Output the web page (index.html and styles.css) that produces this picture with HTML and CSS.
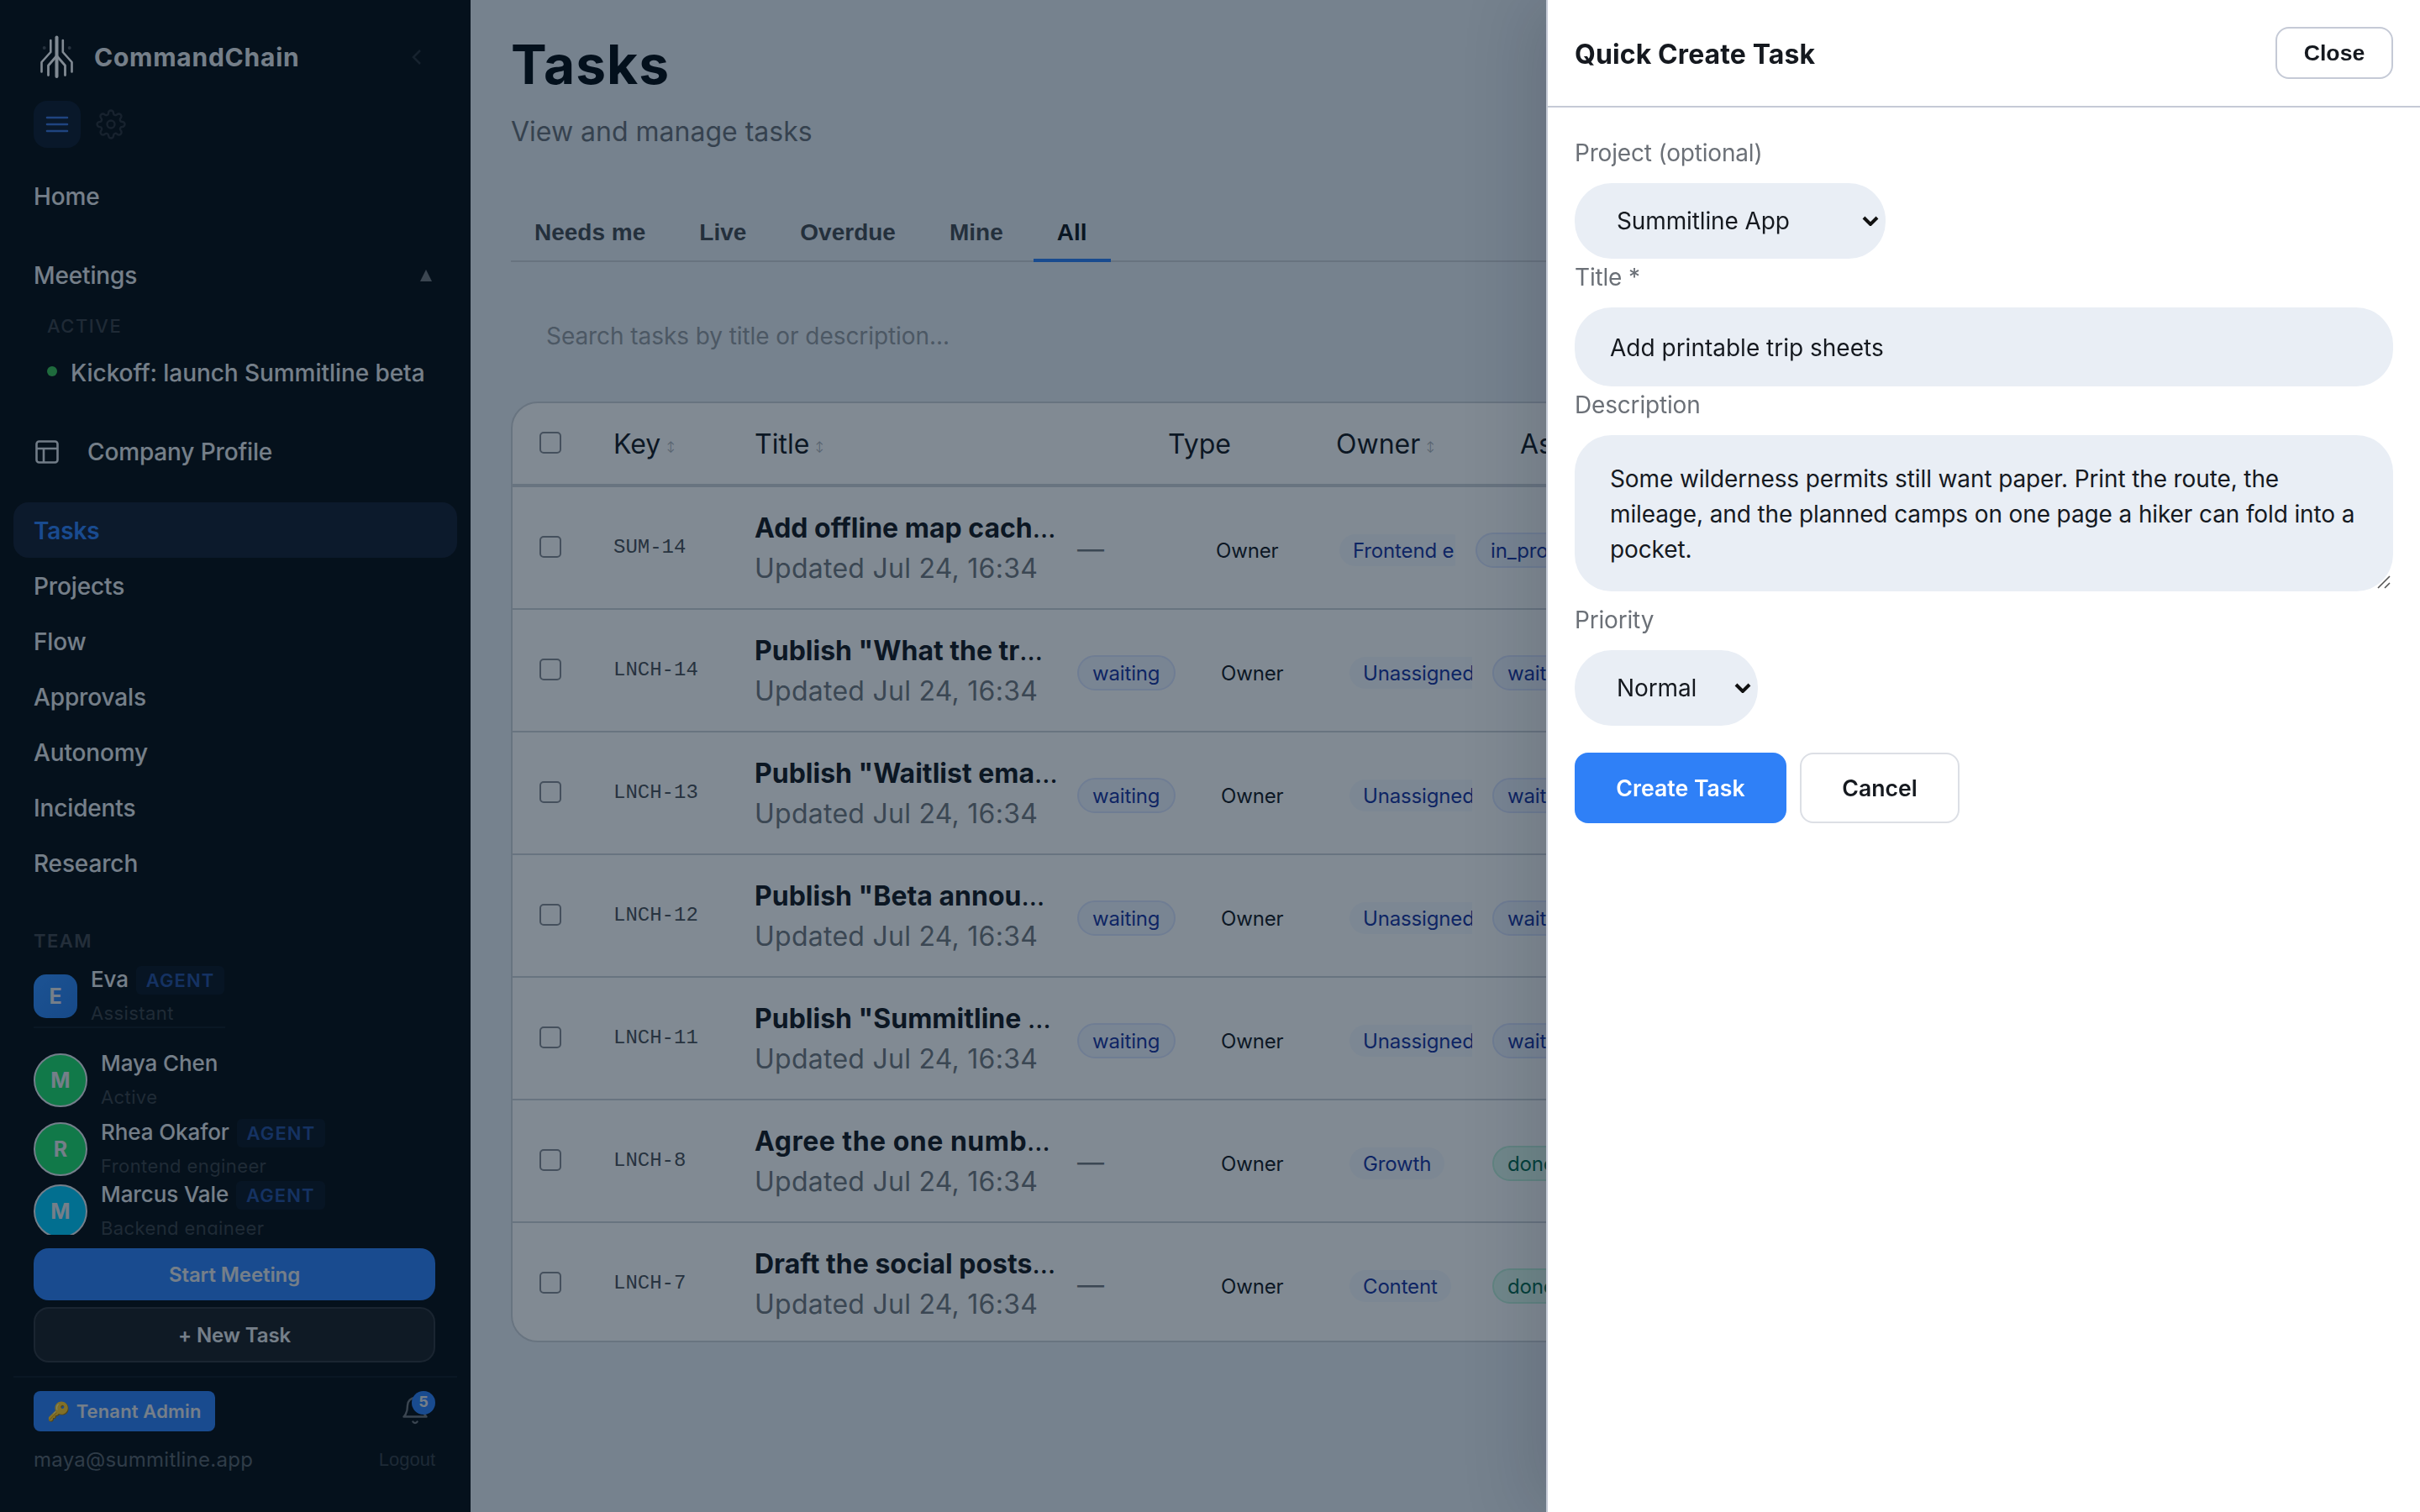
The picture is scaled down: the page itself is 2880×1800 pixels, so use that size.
FILE: index.html
```html
<!DOCTYPE html>
<html>
<head lang="en">
<meta charset="UTF-8">
<title>Tasks - CommandChain</title>
<link rel="stylesheet" href="styles.css">
</head>
<body>
<div class="app">
    <aside class="sidebar">
        <div class="side-top">
            <div class="brand">
                <svg class="logo" viewBox="0 0 56 56" fill="none" stroke="#fff" stroke-linecap="round" stroke-linejoin="round">
                    <path stroke-width="4" d="M27.500 4.500v46.500"/>
                    <path stroke-width="2.600" d="M20.300 8v14L9.500 34v11.500M34.800 8v14l10.700 12v11.500"/>
                    <path stroke-width="2.800" d="M27.500 26.500L17.500 38v11.500M27.500 26.500l10 11.500v11.500"/>
                    <g fill="#4a4f55" stroke="none"><circle cx="12.700" cy="17" r="2"/><circle cx="42.700" cy="17" r="2"/></g>
                </svg>
                <span class="brand-name">CommandChain</span>
                <svg class="chev" viewBox="0 0 12 20"><path d="M10 2L2 10l8 8" fill="none" stroke="#2a3036" stroke-width="2.500"/></svg>
            </div>
            <div class="tools">
                <span class="tool on">
                    <svg width="32" height="32" viewBox="0 0 32 32"><path d="M4 8h24M4 16h24M4 24h24" stroke="#3a72d8" stroke-width="2.600" stroke-linecap="round"/></svg>
                </span>
                <svg class="gear" viewBox="0 0 24 24" fill="none" stroke="#2a2e34" stroke-width="1.600" stroke-linecap="round" stroke-linejoin="round">
                    <circle cx="12" cy="12" r="3"/>
                    <path d="M19.400 15a1.650 1.650 0 0 0 .33 1.820l.06.06a2 2 0 0 1 0 2.830 2 2 0 0 1-2.830 0l-.06-.06a1.650 1.650 0 0 0-1.820-.33 1.650 1.650 0 0 0-1 1.510V21a2 2 0 0 1-2 2 2 2 0 0 1-2-2v-.09A1.650 1.650 0 0 0 9 19.400a1.650 1.650 0 0 0-1.820.33l-.06.06a2 2 0 0 1-2.830 0 2 2 0 0 1 0-2.830l.06-.06a1.650 1.650 0 0 0 .33-1.820 1.650 1.650 0 0 0-1.510-1H3a2 2 0 0 1-2-2 2 2 0 0 1 2-2h.09A1.650 1.650 0 0 0 4.600 9a1.650 1.650 0 0 0-.33-1.820l-.06-.06a2 2 0 0 1 0-2.830 2 2 0 0 1 2.830 0l.06.06a1.650 1.650 0 0 0 1.820.33H9a1.650 1.650 0 0 0 1-1.510V3a2 2 0 0 1 2-2 2 2 0 0 1 2 2v.09a1.650 1.650 0 0 0 1 1.510 1.650 1.650 0 0 0 1.820-.33l.06-.06a2 2 0 0 1 2.830 0 2 2 0 0 1 0 2.830l-.06.06a1.650 1.650 0 0 0-.33 1.820V9a1.650 1.650 0 0 0 1.510 1H21a2 2 0 0 1 2 2 2 2 0 0 1-2 2h-.09a1.650 1.650 0 0 0-1.510 1z"/>
                </svg>
            </div>
            <a class="nav home">Home</a>
            <a class="nav meetings">Meetings <svg width="14" height="14" viewBox="0 0 14 14"><path d="M7 0l7 14H0z" fill="#73767b"/></svg></a>
            <div class="sub-label">ACTIVE</div>
            <a class="meeting"><i class="dot"></i>Kickoff: launch Summitline beta</a>
            <a class="nav company">
                <svg width="32" height="32" viewBox="0 0 32 32" fill="none" stroke="#dfe2e6" stroke-width="2.600"><rect x="3.500" y="3.500" width="25" height="25" rx="3"/><path d="M3.500 12h25M12 12v16.500"/></svg>
                Company Profile
            </a>
            <a class="nav tasks active">Tasks</a>
            <a class="nav">Projects</a>
            <a class="nav">Flow</a>
            <a class="nav">Approvals</a>
            <a class="nav">Autonomy</a>
            <a class="nav">Incidents</a>
            <a class="nav">Research</a>
            <div class="team-label">TEAM</div>
            <div class="person eva">
                <span class="avatar square">E</span>
                <div class="who"><div class="name">Eva <b class="agent">AGENT</b></div><div class="role">Assistant</div></div>
            </div>
            <div class="person maya">
                <span class="avatar green">M</span>
                <div class="who"><div class="name">Maya Chen</div><div class="role">Active</div></div>
            </div>
            <div class="person">
                <span class="avatar green">R</span>
                <div class="who"><div class="name">Rhea Okafor <b class="agent">AGENT</b></div><div class="role">Frontend engineer</div></div>
            </div>
            <div class="person">
                <span class="avatar cyan">M</span>
                <div class="who"><div class="name">Marcus Vale <b class="agent">AGENT</b></div><div class="role">Backend engineer</div></div>
            </div>
        </div>
        <div class="side-actions">
            <button class="start">Start Meeting</button>
            <button class="new">+ New Task</button>
        </div>
        <div class="side-foot">
            <div class="foot-row">
                <span class="tenant"><span class="key">🔑</span>Tenant Admin</span>
                <span class="bell">
                    <svg width="36" height="36" viewBox="0 0 24 24" fill="none" stroke="#73767b" stroke-width="1.600" stroke-linecap="round" stroke-linejoin="round"><path d="M18 8A6 6 0 0 0 6 8c0 7-3 9-3 9h18s-3-2-3-9"/><path d="M13.730 21a2 2 0 0 1-3.460 0"/></svg>
                    <b class="count">5</b>
                </span>
            </div>
            <div class="foot-row user"><span class="mail">maya@summitline.app</span><span class="logout">Logout</span></div>
        </div>
    </aside>

    <main class="main">
        <h1>Tasks</h1>
        <p class="lead">View and manage tasks</p>
        <div class="tabs">
            <span class="tab">Needs me</span>
            <span class="tab">Live</span>
            <span class="tab">Overdue</span>
            <span class="tab">Mine</span>
            <span class="tab cur">All</span>
        </div>
        <div class="search">Search tasks by title or description...</div>
        <div class="table">
            <div class="row head">
                <span class="check"></span>
                <span>Key <i class="sort">↕</i></span>
                <span>Title <i class="sort">↕</i></span>
                <span>Type</span>
                <span>Owner <i class="sort">↕</i></span>
                <span>Assignee</span>
            </div>
            <div class="row first">
                <span class="check"></span>
                <span class="id">SUM-14</span>
                <div class="title"><b>Add offline map cach</b>…<p>Updated Jul 24, 16:34</p></div>
                <span class="cell dash">—</span>
                <span class="cell">Owner</span>
                <span class="cell clip"><i class="pill soft">Frontend e</i></span>
                <span class="cell"><i class="pill">in_progress</i></span>
            </div>
            <div class="row">
                <span class="check"></span>
                <span class="id">LNCH-14</span>
                <div class="title"><b>Publish "What the tr</b>…<p>Updated Jul 24, 16:34</p></div>
                <span class="cell"><i class="pill">waiting</i></span>
                <span class="cell">Owner</span>
                <span class="cell clip"><i class="pill soft">Unassigned</i></span>
                <span class="cell"><i class="pill">waiting</i></span>
            </div>
            <div class="row">
                <span class="check"></span>
                <span class="id">LNCH-13</span>
                <div class="title"><b>Publish "Waitlist ema</b>…<p>Updated Jul 24, 16:34</p></div>
                <span class="cell"><i class="pill">waiting</i></span>
                <span class="cell">Owner</span>
                <span class="cell clip"><i class="pill soft">Unassigned</i></span>
                <span class="cell"><i class="pill">waiting</i></span>
            </div>
            <div class="row">
                <span class="check"></span>
                <span class="id">LNCH-12</span>
                <div class="title"><b>Publish "Beta annou</b>…<p>Updated Jul 24, 16:34</p></div>
                <span class="cell"><i class="pill">waiting</i></span>
                <span class="cell">Owner</span>
                <span class="cell clip"><i class="pill soft">Unassigned</i></span>
                <span class="cell"><i class="pill">waiting</i></span>
            </div>
            <div class="row">
                <span class="check"></span>
                <span class="id">LNCH-11</span>
                <div class="title"><b>Publish "Summitline </b>…<p>Updated Jul 24, 16:34</p></div>
                <span class="cell"><i class="pill">waiting</i></span>
                <span class="cell">Owner</span>
                <span class="cell clip"><i class="pill soft">Unassigned</i></span>
                <span class="cell"><i class="pill">waiting</i></span>
            </div>
            <div class="row">
                <span class="check"></span>
                <span class="id">LNCH-8</span>
                <div class="title"><b class="wide">Agree the one numb</b>…<p>Updated Jul 24, 16:34</p></div>
                <span class="cell dash">—</span>
                <span class="cell">Owner</span>
                <span class="cell clip"><i class="pill soft">Growth</i></span>
                <span class="cell"><i class="pill done">done</i></span>
            </div>
            <div class="row last">
                <span class="check"></span>
                <span class="id">LNCH-7</span>
                <div class="title"><b>Draft the social posts</b>…<p>Updated Jul 24, 16:34</p></div>
                <span class="cell dash">—</span>
                <span class="cell">Owner</span>
                <span class="cell clip"><i class="pill soft">Content</i></span>
                <span class="cell"><i class="pill done">done</i></span>
            </div>
        </div>
    </main>
</div>

<div class="overlay"></div>
<section class="drawer">
    <header class="drawer-head">
        <h2>Quick Create Task</h2>
        <button class="close">Close</button>
    </header>
    <div class="form">
        <label>Project (optional)</label>
        <div class="select project">Summitline App <svg width="20" height="12" viewBox="0 0 20 12"><path d="M2 2l8 8 8-8" fill="none" stroke="#111" stroke-width="4"/></svg></div>
        <label class="l-title">Title *</label>
        <div class="input">Add printable trip sheets</div>
        <label class="l-desc">Description</label>
        <div class="area">Some wilderness permits still want paper. Print the route, the mileage, and the planned camps on one page a hiker can fold into a pocket.
            <svg class="grip" viewBox="0 0 16 16"><path d="M1 15L15 1M9 15l6-6" stroke="#555" stroke-width="1.600"/></svg>
        </div>
        <label class="l-prio">Priority</label>
        <div class="select priority">Normal <svg width="20" height="12" viewBox="0 0 20 12"><path d="M2 2l8 8 8-8" fill="none" stroke="#111" stroke-width="4"/></svg></div>
        <div class="buttons">
            <button class="create">Create Task</button>
            <button class="cancel">Cancel</button>
        </div>
    </div>
</section>
</body>
</html>
```
FILE: styles.css
```css
*{
    margin:0;
    padding:0;
    box-sizing:border-box;
}
body{
    width:2880px;
    height:1800px;
    overflow:hidden;
    font-family:Inter,"Liberation Sans",sans-serif;
    font-size:28px;
    color:#15191f;
}
button{
    border:0;
    background:none;
    font-family:inherit;
}
i{
    font-style:normal;
}
svg{
    flex:none;
    display:block;
}
.app{
    display:flex;
    width:2880px;
    height:1800px;
    background:#e9eef5;
}

/* sidebar */
.sidebar{
    flex:none;
    width:560px;
    height:1800px;
    padding:0 16px;
    background:#070c10;
    color:#e6e8eb;
}
.side-top{
    height:1470px;
    padding-top:40px;
    overflow:hidden;
}
.brand{
    display:flex;
    align-items:center;
    height:56px;
    padding:0 42px 0 24px;
}
.logo{
    width:56px;
    height:56px;
}
.brand-name{
    flex:1;
    margin-left:16px;
    font-size:30px;
    font-weight:700;
    letter-spacing:.75px;
}
.chev{
    width:12px;
    height:20px;
}
.tools{
    display:flex;
    align-items:center;
    gap:18px;
    margin-top:24px;
    padding-left:24px;
}
.tool{
    display:flex;
    align-items:center;
    justify-content:center;
    width:56px;
    height:56px;
    border-radius:16px;
}
.tool.on{
    background:#0e1a2c;
}
.gear{
    width:36px;
    height:36px;
}
.nav{
    display:flex;
    align-items:center;
    height:66px;
    padding:1px 24px 0;
    font-weight:500;
    letter-spacing:-.14px;
    border-radius:18px;
}
.home{
    margin-top:24px;
}
.meetings{
    justify-content:space-between;
    margin-top:28px;
    padding-right:30px;
}
.sub-label{
    margin-top:1px;
    padding-left:40px;
    line-height:54px;
    font-size:22px;
    font-weight:500;
    letter-spacing:1.5px;
    color:#3a3f44;
}
.meeting{
    display:flex;
    align-items:center;
    height:58px;
    padding-left:40px;
    font-weight:500;
    letter-spacing:-.06px;
    white-space:nowrap;
}
.dot{
    width:12px;
    height:12px;
    margin:-4px 16px 0 0;
    border-radius:50%;
    background:#3bc052;
}
.company{
    gap:32px;
    margin-top:31px;
}
.tasks{
    margin-top:28px;
}
.nav.active{
    background:#151e31;
    color:#2f80f7;
    font-weight:600;
}
.team-label{
    margin-top:40px;
    padding-left:24px;
    line-height:40px;
    font-size:22px;
    font-weight:600;
    letter-spacing:1.5px;
    color:#43474c;
}
.person{
    display:flex;
    align-items:center;
    gap:16px;
    height:74px;
    margin-left:24px;
}
.eva{
    width:228px;
    margin-top:10px;
    border-bottom:2px solid #101820;
}
.maya{
    margin:25px 0 8px 24px;
}
.avatar{
    display:flex;
    align-items:center;
    justify-content:center;
    flex:none;
    width:64px;
    height:64px;
    border:2px solid #e4e8ee;
    border-radius:50%;
    font-size:25px;
    font-weight:700;
}
.avatar.square{
    width:52px;
    height:52px;
    border:0;
    border-radius:15px;
    background:linear-gradient(135deg,#3490ff,#2a7de8);
}
.avatar.green{
    background:#1edc6a;
}
.avatar.cyan{
    background:#00c8f8;
}
.who{
    line-height:40px;
    white-space:nowrap;
}
.name{
    font-size:26px;
    font-weight:500;
    letter-spacing:-.1px;
}
.agent{
    display:inline-block;
    margin-left:2px;
    padding:0 12px;
    border-radius:6px;
    line-height:34px;
    font-size:22px;
    font-weight:600;
    letter-spacing:1.1px;
    background:#0b1520;
    color:#264e9c;
}
.role{
    font-size:22px;
    letter-spacing:.4px;
    color:#3b4045;
}
.side-actions{
    display:flex;
    flex-direction:column;
    gap:8px;
    padding:16px 26px 16px 24px;
}
.side-actions button{
    height:62px;
    border-radius:18px;
    font-size:24px;
    font-weight:600;
    letter-spacing:-.1px;
    color:#e6e8eb;
}
.start{
    background:#2f80f7;
}
.side-actions .new{
    height:66px;
    border:2px solid #31353a;
    background:#1b1e23;
}
.side-foot{
    border-top:2px solid #101820;
    padding:16px 26px 0 24px;
}
.foot-row{
    display:flex;
    align-items:center;
    justify-content:space-between;
}
.tenant{
    display:flex;
    align-items:center;
    justify-content:center;
    width:216px;
    height:48px;
    border-radius:8px;
    background:#2f80f7;
    font-size:22px;
    font-weight:600;
    letter-spacing:.15px;
    white-space:nowrap;
}
.key{
    margin-right:7px;
}
.bell{
    position:relative;
    width:42px;
    height:38px;
}
.count{
    position:absolute;
    top:-5px;
    right:0;
    width:28px;
    height:28px;
    border-radius:50%;
    background:#2f80f7;
    line-height:25px;
    font-size:18px;
    text-align:center;
}
.user{
    margin-top:14px;
    line-height:40px;
}
.mail{
    font-size:24px;
    letter-spacing:.25px;
    color:#5b6269;
}
.logout{
    font-family:"Liberation Sans",sans-serif;
    font-size:22px;
    color:#373e45;
}

/* task list */
.main{
    flex:none;
    width:2320px;
    padding:36px 48px 0;
}
h1{
    line-height:82px;
    font-size:64px;
    font-weight:700;
    letter-spacing:1px;
    color:#030a11;
}
.lead{
    margin-top:19px;
    line-height:40px;
    font-size:32px;
    color:#696e77;
}
.tabs{
    display:flex;
    gap:8px;
    height:72px;
    margin-top:63px;
    border-bottom:2px solid #cdd0d7;
}
.tab{
    height:72px;
    padding:0 28px;
    line-height:74px;
    font-family:"Liberation Sans",sans-serif;
    font-weight:700;
    color:#454a51;
}
.tab.cur{
    border-bottom:4px solid #2f80f7;
    color:#11161d;
}
.search{
    margin:48px 0;
    padding-left:42px;
    line-height:80px;
    letter-spacing:-.07px;
    color:#959aa1;
}
.table{
    height:1120px;
    margin-top:-10px;
    border:2px solid #cdd2d9;
    border-radius:32px;
    background:#fff;
    overflow:hidden;
}
.row{
    display:grid;
    grid-template-columns:120px 168px 384px 171px 155px 168px 300px;
    height:146px;
    border-bottom:2px solid #cdd2d9;
    white-space:nowrap;
}
.row.first{
    grid-template-columns:120px 168px 384px 165px 149px 160px 300px;
}
.row.last{
    border-bottom:0;
}
.row.head{
    grid-template-columns:120px 168px 492px 200px 219px 300px;
    height:100px;
    border-bottom:4px solid #cdd2d9;
    line-height:98px;
    font-size:32px;
}
.sort{
    margin-left:-2px;
    font-size:12px;
    vertical-align:4px;
    color:#a9aeb5;
}
.check{
    width:26px;
    height:26px;
    margin:58px 0 0 32px;
    border:2px solid #868b92;
    border-radius:5px;
}
.head .check{
    margin-top:34px;
}
.id{
    line-height:144px;
    font-family:"Liberation Mono",monospace;
    font-size:24px;
    color:#4b5057;
}
.title{
    padding-top:25px;
    line-height:48px;
    font-size:32px;
}
.title b{
    font-weight:700;
    white-space:pre;
}
.title .wide{
    letter-spacing:.5px;
}
.title p{
    letter-spacing:.26px;
    color:#73787f;
}
.cell{
    padding-top:54px;
    line-height:44px;
    font-size:24px;
    letter-spacing:-.15px;
}
.cell.clip{
    margin:0 24px 0 -4px;
    overflow:hidden;
}
.cell.dash{
    padding-top:52px;
    font-size:32px;
    color:#73787f;
}
.pill{
    display:inline-block;
    height:42px;
    padding:0 17px 0 16px;
    border:2px solid #dbe4ff;
    border-radius:21px;
    background:#eff4ff;
    line-height:39px;
    letter-spacing:-.15px;
    color:#1934a0;
}
.pill.soft{
    padding:0 16px;
    border-color:transparent;
    background:#f4f8ff;
    background-clip:padding-box;
}
.pill.done{
    border-color:#c0f2dc;
    background:#dffaee;
    color:#066b4e;
}

/* quick create drawer */
.overlay{
    position:fixed;
    top:0;
    left:0;
    width:100%;
    height:100%;
    background:rgba(3,22,39,.5);
}
.drawer{
    position:fixed;
    top:0;
    right:0;
    width:1040px;
    height:1800px;
    border-left:2px solid #c5cad6;
    background:#fff;
    box-shadow:-16px 0 80px rgba(10,20,40,.16);
}
.drawer-head{
    display:flex;
    align-items:center;
    justify-content:space-between;
    height:128px;
    padding:0 32px;
    border-bottom:2px solid #c5cad6;
}
h2{
    padding-top:2px;
    font-size:32px;
    font-weight:700;
    letter-spacing:.1px;
}
.close{
    width:140px;
    height:62px;
    border:2px solid #c5cad6;
    border-radius:16px;
    font-family:"Liberation Sans",sans-serif;
    font-size:26.670px;
    font-weight:700;
    color:#15191f;
}
.form{
    padding:34px 32px 0;
}
.form label{
    display:block;
    height:40px;
    line-height:41px;
    letter-spacing:-.18px;
    color:#6b7077;
}
.select{
    display:flex;
    align-items:center;
    justify-content:space-between;
    height:90px;
    margin-top:16px;
    padding:0 8px 0 50px;
    border-radius:44px;
    background:#e9eef5;
    line-height:92px;
    letter-spacing:-.12px;
}
.project{
    width:370px;
}
.priority{
    width:218px;
}
.form .l-title{
    margin-top:2px;
}
.input{
    height:94px;
    margin-top:16px;
    padding-left:42px;
    border-radius:44px;
    background:#e9eef5;
    line-height:96px;
}
.form .l-desc{
    margin-top:2px;
}
.area{
    position:relative;
    height:186px;
    margin-top:16px;
    padding:31px 36px 29px 42px;
    border-radius:44px;
    background:#e9eef5;
    line-height:42px;
    letter-spacing:-.12px;
}
.grip{
    position:absolute;
    right:3px;
    bottom:3px;
    width:16px;
    height:16px;
}
.form .l-prio{
    margin-top:14px;
}
.buttons{
    display:flex;
    gap:16px;
    margin-top:32px;
}
.buttons button{
    height:84px;
    border-radius:16px;
    font-size:26.670px;
    font-weight:600;
}
.create{
    width:252px;
    background:#2f80f7;
    color:#fff;
}
.cancel{
    width:190px;
    color:#15191f;
}
.buttons .cancel{
    border:2px solid #dcdfe5;
}
```
